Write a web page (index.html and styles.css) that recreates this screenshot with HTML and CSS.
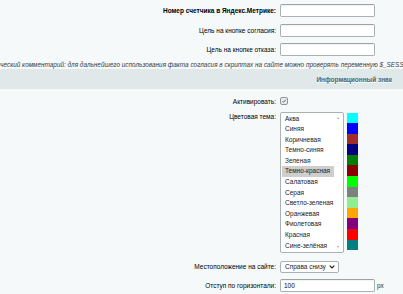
FILE: index.html
```html
<!DOCTYPE html>
<html lang="ru">
<head>
    <meta charset="UTF-8" />
    <title>Настройки модуля</title>
    <link rel="stylesheet" href="styles.css">
</head>
<body>
    <div class="form">
        <div class="row first">
            <div class="label bold">Номер счетчика в Яндекс.Метрике:</div>
            <input class="text" type="text" />
        </div>
        <div class="row">
            <div class="label">Цель на кнопке согласия:</div>
            <input class="text" type="text" />
        </div>
        <div class="row">
            <div class="label">Цель на кнопке отказа:</div>
            <input class="text" type="text" />
        </div>

        <div class="note">Технический комментарий: для дальнейшего использования факта согласия в скриптах на сайте можно проверять переменную $_SESSION['COOKIE_AGREEMENT']</div>

        <div class="heading">Информационный знак</div>

        <div class="row check-row">
            <div class="label">Активировать:</div>
            <span class="checkbox">
                <svg width="8" height="8" viewBox="0 0 8 8">
                    <path d="M1.8 4.2 L3.4 5.8 L6.4 2.2" fill="none" stroke="#4a575b" stroke-width="1.1"/>
                </svg>
            </span>
        </div>

        <div class="row theme-row">
            <div class="label top">Цветовая тема:</div>
            <div class="listbox">
                <ul class="options">
                    <li>Аква</li>
                    <li>Синяя</li>
                    <li>Коричневая</li>
                    <li>Темно-синяя</li>
                    <li>Зеленая</li>
                    <li class="selected">Темно-красная</li>
                    <li>Салатовая</li>
                    <li>Серая</li>
                    <li>Светло-зеленая</li>
                    <li>Оранжевая</li>
                    <li>Фиолетовая</li>
                    <li>Красная</li>
                    <li>Сине-зелёная</li>
                </ul>
                <div class="scrollbar">
                    <span class="arrow up"></span>
                    <span class="arrow down"></span>
                </div>
            </div>
            <div class="swatches">
                <span style="background:#00ffff"></span>
                <span style="background:#0000ff"></span>
                <span style="background:#a52a2a"></span>
                <span style="background:#000080"></span>
                <span style="background:#008000"></span>
                <span style="background:#8b0000"></span>
                <span style="background:#00ff00"></span>
                <span style="background:#808080"></span>
                <span style="background:#90ee90"></span>
                <span style="background:#ffa500"></span>
                <span style="background:#800080"></span>
                <span style="background:#ff0000"></span>
                <span style="background:#008080"></span>
            </div>
        </div>

        <div class="row select-row">
            <div class="label">Местоположение на сайте:</div>
            <div class="select">
                Справа снизу
                <svg class="chevron" width="6" height="4" viewBox="0 0 6 4">
                    <path d="M0.7 0.7 L3 3 L5.3 0.7" fill="none" stroke="#222" stroke-width="1.2"/>
                </svg>
            </div>
        </div>

        <div class="row">
            <div class="label">Отступ по горизонтали:</div>
            <input class="text" type="text" value="100" />
            <span class="unit">px</span>
        </div>
    </div>
    <div class="bottom-bar"></div>
</body>
</html>
```

FILE: styles.css
```css
body {
    margin: 0;
    background: #f5f9f9;
    font-family: 'Liberation Sans', Arial, sans-serif;
    font-size: 6.5px;
    color: #000;
    overflow: hidden;
}

.form {
    padding-top: 4px;
}

.row {
    display: flex;
    align-items: center;
    margin-top: 6.5px;
}

.row.first {
    margin-top: 0;
}

.label {
    flex: 0 0 276px;
    text-align: right;
    margin-right: 4px;
    white-space: nowrap;
}

.label.bold {
    font-weight: bold;
}

.label.top {
    align-self: flex-start;
    padding-top: 1px;
}

input.text {
    width: 95px;
    height: 13px;
    box-sizing: border-box;
    margin: 0;
    padding: 0 3px;
    border: 1px solid #a9b1b3;
    border-top-color: #9aa2a4;
    border-radius: 2px;
    background: #fff;
    font-family: inherit;
    font-size: 6.5px;
    color: #000;
    box-shadow: inset 0 1px 1px rgba(0,0,0,0.05);
}

/* the comment is wider than the window, it is cut on both sides */
.note {
    margin-top: 5px;
    margin-left: -17px;
    line-height: 8px;
    font-size: 6.4px;
    white-space: nowrap;
    font-style: italic;
    color: #3a3a3a;
}

.heading {
    height: 20px;
    line-height: 21px;
    background: #e0e8ea;
    color: #4b6267;
    font-weight: bold;
    text-align: right;
    padding-right: 11px;
    text-shadow: 0 1px #fff;
}

.check-row {
    margin-top: 8px;
}

.checkbox {
    width: 8px;
    height: 8px;
    box-sizing: border-box;
    border: 1px solid #8d9799;
    border-radius: 2px;
    background: #e6ebec;
    display: flex;
    align-items: center;
    justify-content: center;
}

.checkbox svg {
    display: block;
}

.theme-row {
    align-items: flex-start;
}

.listbox {
    width: 64px;
    height: 141px;
    box-sizing: border-box;
    border: 1px solid #a9b1b3;
    border-radius: 2px;
    background: #fff;
    display: flex;
}

.options {
    list-style: none;
    margin: 0;
    padding: 1px 0 0 1px;
    flex: 1;
}

.options li {
    height: 10.6px;
    line-height: 10.6px;
    padding-left: 3px;
    color: #222;
    white-space: nowrap;
}

.options li.selected {
    background: #cecece;
}

.scrollbar {
    width: 9px;
    position: relative;
}

.arrow {
    position: absolute;
    left: 3px;
    width: 0;
    height: 0;
    border-left: 1.5px solid transparent;
    border-right: 1.5px solid transparent;
}

.arrow.up {
    top: 4px;
    border-bottom: 2px solid #a0a0a0;
}

.arrow.down {
    bottom: 4px;
    border-top: 2px solid #a0a0a0;
}

.swatches {
    margin-left: 3px;
    padding-top: 1px;
    display: flex;
    flex-direction: column;
}

.swatches span {
    width: 11px;
    height: 10.6px;
}

.select-row {
    margin-top: 8px;
}

.select {
    width: 59px;
    height: 12px;
    box-sizing: border-box;
    border: 1px solid #a9b1b3;
    border-radius: 2px;
    background: #fff;
    padding-left: 4px;
    display: flex;
    align-items: center;
    justify-content: space-between;
    padding-right: 3px;
    color: #222;
}

.chevron {
    display: block;
}

.unit {
    margin-left: 2px;
    color: #333;
}

.bottom-bar {
    height: 3px;
    margin-top: 2px;
    background: #e3e7e8;
}
```
